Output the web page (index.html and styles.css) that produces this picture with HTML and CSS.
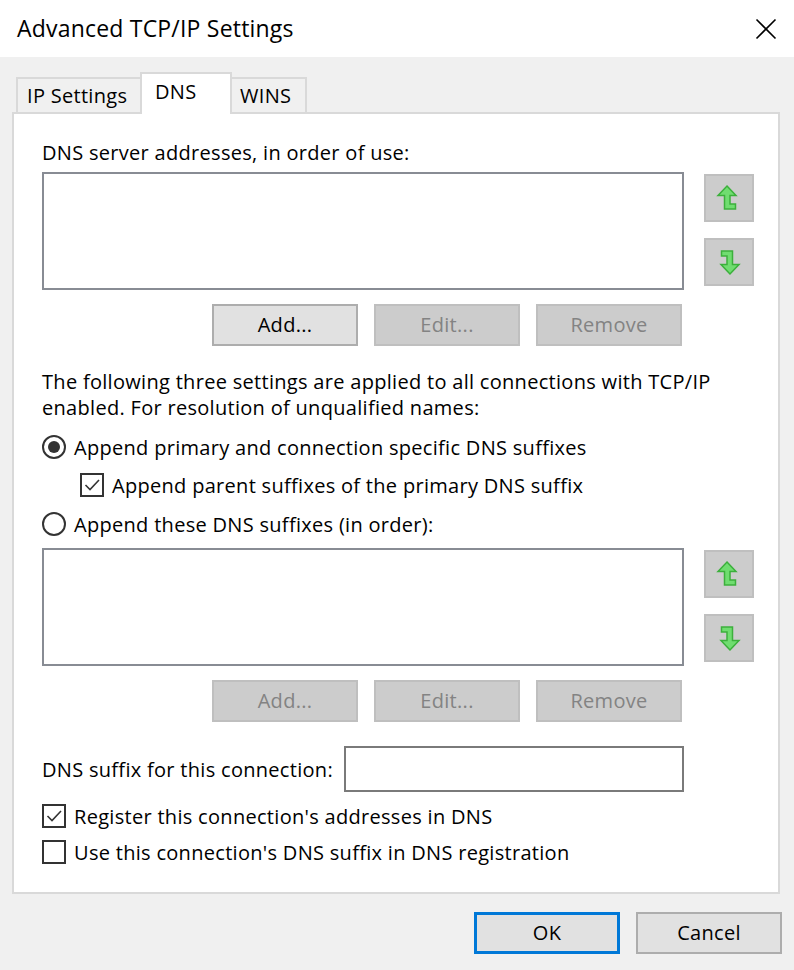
FILE: index.html
```html
<!DOCTYPE html>
<html lang="en">
<head>
<meta charset="utf-8">
<title>Advanced TCP/IP Settings</title>
<link rel="stylesheet" href="styles.css">
</head>
<body>
<div class="window">
  <div class="titlebar">
    <span class="title">Advanced TCP/IP Settings</span>
    <svg class="close" width="22" height="22" viewBox="0 0 22 22"><path d="M1.5 1.5 L20.5 20.5 M20.5 1.5 L1.5 20.5" stroke="#000" stroke-width="1.6" fill="none"/></svg>
  </div>
  <div class="client">
    <div class="tabs">
      <div class="tab tab-ip">IP Settings</div>
      <div class="tab tab-dns active">DNS</div>
      <div class="tab tab-wins">WINS</div>
    </div>
    <div class="panel">
      <div class="label first">DNS server addresses, in order of use:</div>
      <div class="list-row">
        <div class="listbox"></div>
        <div class="arrows">
          <div class="arrow-btn">
            <svg width="46" height="44" viewBox="0 0 46 44"><path class="arr" d="M21 10 L30 19.5 L24 19.5 L24 28 L29.5 28 L29.5 33 L18.5 33 L18.5 19.5 L12 19.5 Z"/></svg>
          </div>
          <div class="arrow-btn">
            <svg width="46" height="44" viewBox="0 0 46 44"><path class="arr" transform="rotate(180 22.5 22)" d="M21 10 L30 19.5 L24 19.5 L24 28 L29.5 28 L29.5 33 L18.5 33 L18.5 19.5 L12 19.5 Z"/></svg>
          </div>
        </div>
      </div>
      <div class="btn-row">
        <div class="btn">Add...</div>
        <div class="btn disabled">Edit...</div>
        <div class="btn disabled">Remove</div>
      </div>
      <p class="para">The following three settings are applied to all connections with TCP/IP enabled. For resolution of unqualified names:</p>
      <div class="opt opt-radio1"><span class="radio checked"></span>Append primary and connection specific DNS suffixes</div>
      <div class="opt opt-check1 indent"><span class="check"><svg width="20" height="20" viewBox="0 0 20 20"><path d="M3.5 10 L8 14.5 L17 5" stroke="#333" stroke-width="1.6" fill="none"/></svg></span>Append parent suffixes of the primary DNS suffix</div>
      <div class="opt opt-radio2"><span class="radio"></span>Append these DNS suffixes (in order):</div>
      <div class="list-row list2">
        <div class="listbox"></div>
        <div class="arrows">
          <div class="arrow-btn">
            <svg width="46" height="44" viewBox="0 0 46 44"><path class="arr" d="M21 10 L30 19.5 L24 19.5 L24 28 L29.5 28 L29.5 33 L18.5 33 L18.5 19.5 L12 19.5 Z"/></svg>
          </div>
          <div class="arrow-btn">
            <svg width="46" height="44" viewBox="0 0 46 44"><path class="arr" transform="rotate(180 22.5 22)" d="M21 10 L30 19.5 L24 19.5 L24 28 L29.5 28 L29.5 33 L18.5 33 L18.5 19.5 L12 19.5 Z"/></svg>
          </div>
        </div>
      </div>
      <div class="btn-row">
        <div class="btn disabled">Add...</div>
        <div class="btn disabled">Edit...</div>
        <div class="btn disabled">Remove</div>
      </div>
      <div class="suffix-row">
        <span class="suffix-label">DNS suffix for this connection:</span>
        <div class="textbox"></div>
      </div>
      <div class="opt opt-reg"><span class="check"><svg width="20" height="20" viewBox="0 0 20 20"><path d="M3.5 10 L8 14.5 L17 5" stroke="#333" stroke-width="1.6" fill="none"/></svg></span>Register this connection's addresses in DNS</div>
      <div class="opt opt-use"><span class="check"></span>Use this connection's DNS suffix in DNS registration</div>
    </div>
    <div class="footer">
      <div class="btn default">OK</div>
      <div class="btn">Cancel</div>
    </div>
  </div>
</div>
</body>
</html>
```

FILE: styles.css
```css
* { box-sizing: border-box; }
html, body { margin: 0; padding: 0; }
body {
  background: #f0f0f0;
  font-family: "Open Sans", "Noto Sans", sans-serif;
  font-size: 20px;
  letter-spacing: 0.3px;
  color: #000;
  width: 794px;
  height: 970px;
  overflow: hidden;
}
.titlebar {
  height: 57px;
  background: #fff;
  display: flex;
  align-items: center;
  justify-content: space-between;
  padding: 0 17px 2px 17px;
}
.title { font-size: 23px; letter-spacing: 0.2px; }
.close { margin-right: 0; margin-top: 2px; }
.client { padding: 15px 12px 0 12px; }
.tabs {
  display: flex;
  align-items: flex-end;
  height: 40px;
  padding-left: 4px;
}
.tab {
  height: 35px;
  border: 2px solid #d9d9d9;
  border-bottom: none;
  background: #f0f0f0;
  line-height: 33px;
  white-space: nowrap;
}
.tab + .tab { margin-left: -2px; }
.tab-ip { width: 126px; padding-left: 9px; }
.tab-dns { width: 92px; padding-left: 13px; }
.tab-wins { width: 77px; padding-left: 8px; }
.tab.active {
  height: 42px;
  margin-bottom: -2px;
  background: #fff;
  position: relative;
  z-index: 1;
  line-height: 36px;
}
.panel {
  width: 768px;
  height: 782px;
  border: 2px solid #d9d9d9;
  background: #fff;
  padding: 0 24px 0 28px;
}
.label { line-height: 26px; }
.label.first { margin-top: 26px; }
.list-row {
  display: flex;
  gap: 20px;
  margin-top: 6px;
}
.list-row.list2 { margin-top: 11px; }
.listbox {
  width: 642px;
  height: 118px;
  border: 2px solid #888c94;
  background: #fff;
}
.arrows {
  display: flex;
  flex-direction: column;
  gap: 16px;
  padding-top: 2px;
}
.arrow-btn {
  width: 50px;
  height: 48px;
  background: #cccccc;
  border: 2px solid #bfbfbf;
}
.arrow-btn svg { display: block; }
.arr {
  fill: #70dd70;
  stroke: #3cb03c;
  stroke-width: 1.5;
  stroke-linejoin: miter;
}
.btn-row {
  display: flex;
  gap: 16px;
  margin-top: 14px;
  margin-left: 170px;
}
.btn {
  width: 146px;
  height: 42px;
  background: #e1e1e1;
  border: 2px solid #adadad;
  display: flex;
  align-items: center;
  justify-content: center;
  padding-bottom: 2px;
}
.btn.disabled {
  background: #cccccc;
  border-color: #bfbfbf;
  color: #838383;
}
.btn.default { border: 3px solid #0078d7; }
.para {
  margin: 23px 0 0 0;
  line-height: 26px;
  width: 710px;
}
.opt {
  display: flex;
  align-items: center;
  height: 26px;
  white-space: nowrap;
}
.opt-radio1 { margin-top: 13px; }
.opt-check1 { margin-top: 12px; }
.opt-radio2 { margin-top: 13px; }
.opt-reg { margin-top: 11px; }
.opt-use { margin-top: 10px; }
.indent { padding-left: 38px; }
.radio {
  width: 24px;
  height: 24px;
  border: 2px solid #333;
  border-radius: 50%;
  margin-right: 8px;
  display: flex;
  align-items: center;
  justify-content: center;
  flex: none;
}
.radio.checked::after {
  content: "";
  width: 12px;
  height: 12px;
  border-radius: 50%;
  background: #333;
}
.check {
  width: 24px;
  height: 24px;
  border: 2px solid #333;
  margin-right: 8px;
  flex: none;
  background: #fff;
}
.check svg { display: block; }
.suffix-row {
  display: flex;
  align-items: center;
  margin-top: 24px;
}
.suffix-label { width: 302px; white-space: nowrap; }
.textbox {
  width: 340px;
  height: 46px;
  border: 2px solid #7a7a7a;
  background: #fff;
}
.footer {
  display: flex;
  justify-content: flex-end;
  gap: 16px;
  margin-top: 18px;
}
```
